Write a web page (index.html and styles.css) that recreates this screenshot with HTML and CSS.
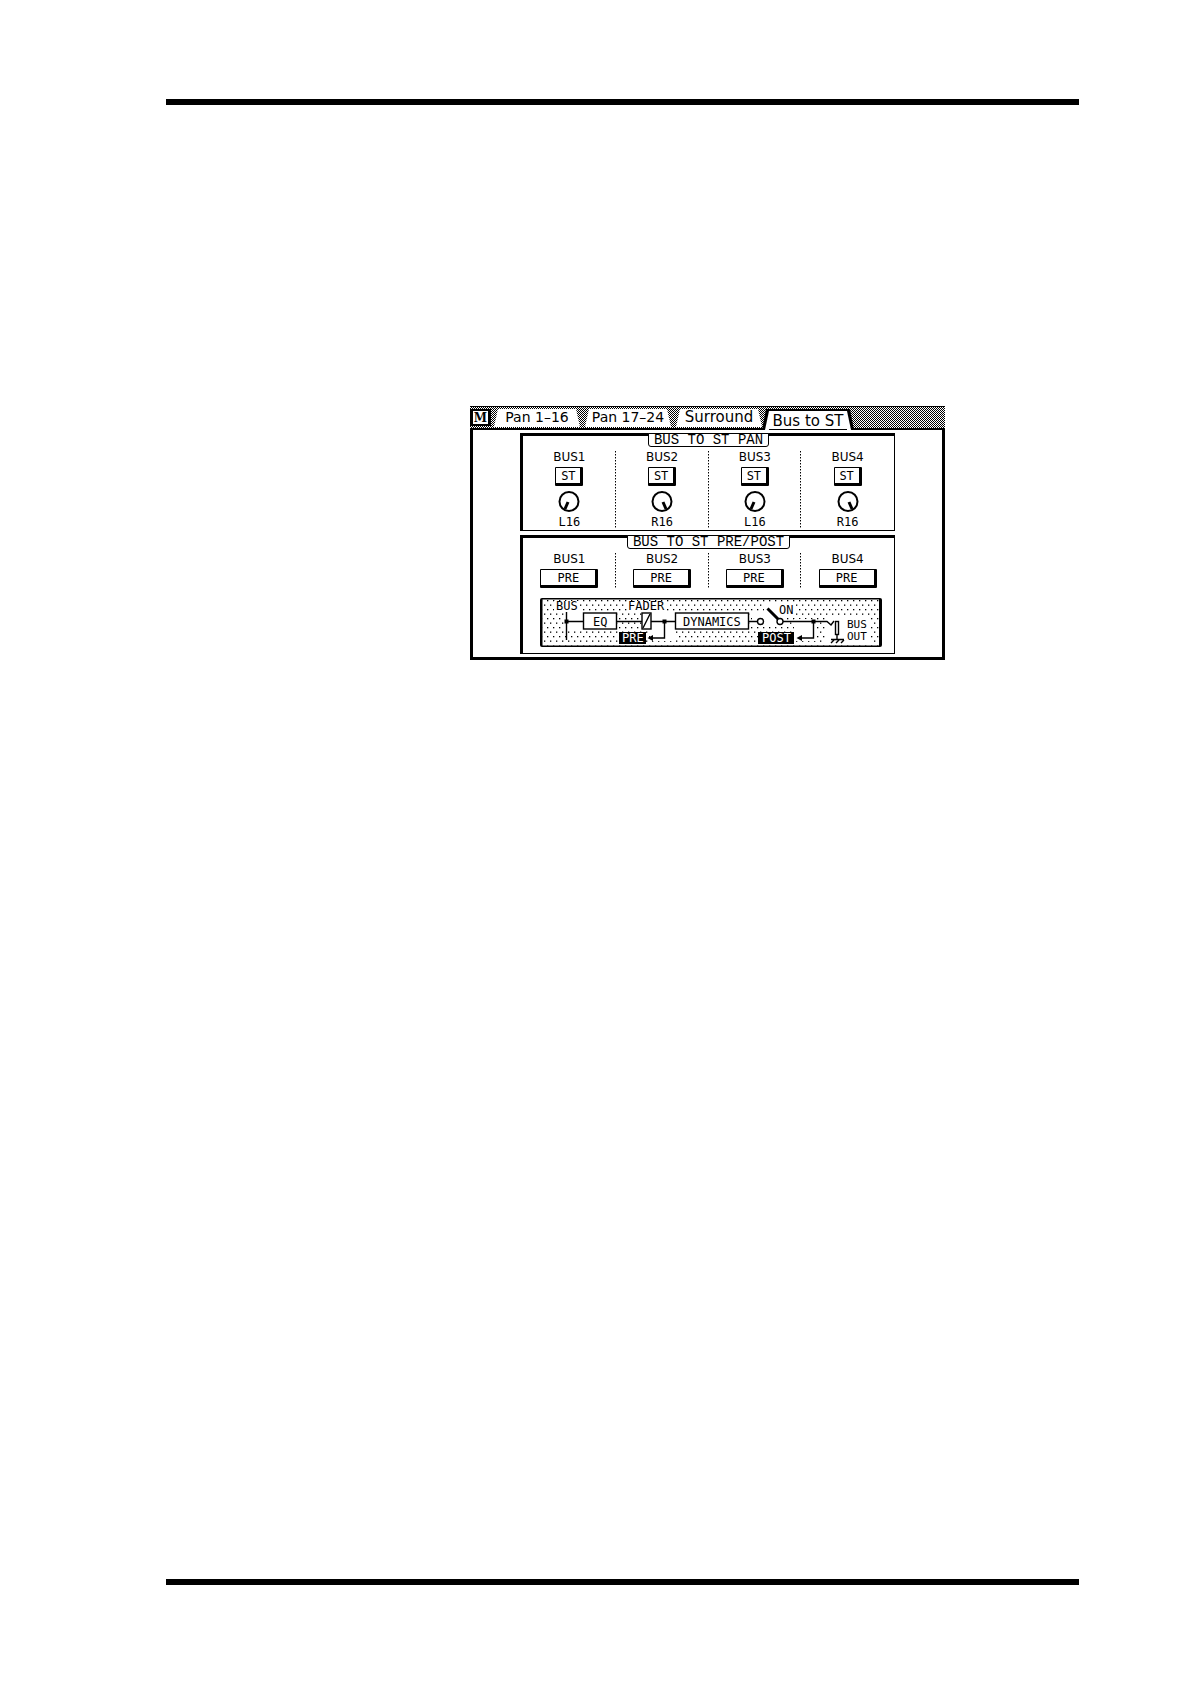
FILE: index.html
```html
<!DOCTYPE html>
<html lang="en">
<head>
  <meta charset="utf-8">
  <title>Bus to ST</title>
  <link rel="stylesheet" href="styles.css">
</head>
<body>
  <hr class="rule">

  <main class="screen">
    <nav class="tabs">
      <button class="mode">M</button>
      <button class="tab">Pan 1–16</button>
      <button class="tab">Pan 17–24</button>
      <button class="tab wide">Surround</button>
      <button class="tab active wide"><span>Bus to ST</span></button>
    </nav>

    <div class="content">
      <section class="panel">
        <h2>BUS TO ST PAN</h2>
        <div class="buses">
          <div class="bus">
            <h3>BUS1</h3>
            <button class="key">ST</button>
            <svg class="knob" viewBox="0 0 22 22"><circle cx="11" cy="11.5" r="9.5"/><path d="M10 12L7 19"/></svg>
            <span class="value">L16</span>
          </div>
          <div class="bus">
            <h3>BUS2</h3>
            <button class="key">ST</button>
            <svg class="knob" viewBox="0 0 22 22"><circle cx="11" cy="11.5" r="9.5"/><path d="M12 12L15 19"/></svg>
            <span class="value">R16</span>
          </div>
          <div class="bus">
            <h3>BUS3</h3>
            <button class="key">ST</button>
            <svg class="knob" viewBox="0 0 22 22"><circle cx="11" cy="11.5" r="9.5"/><path d="M10 12L7 19"/></svg>
            <span class="value">L16</span>
          </div>
          <div class="bus">
            <h3>BUS4</h3>
            <button class="key">ST</button>
            <svg class="knob" viewBox="0 0 22 22"><circle cx="11" cy="11.5" r="9.5"/><path d="M12 12L15 19"/></svg>
            <span class="value">R16</span>
          </div>
        </div>
      </section>

      <section class="panel">
        <h2>BUS TO ST PRE/POST</h2>
        <div class="buses">
          <div class="bus">
            <h3>BUS1</h3>
            <button class="key long">PRE</button>
          </div>
          <div class="bus">
            <h3>BUS2</h3>
            <button class="key long">PRE</button>
          </div>
          <div class="bus">
            <h3>BUS3</h3>
            <button class="key long">PRE</button>
          </div>
          <div class="bus">
            <h3>BUS4</h3>
            <button class="key long">PRE</button>
          </div>
        </div>

        <svg class="diagram" viewBox="0 0 342 49">
          <defs>
            <pattern id="dots" width="6" height="9" patternUnits="userSpaceOnUse">
              <rect x="1" y="2" width="1.3" height="1.3"/>
              <rect x="4" y="6.5" width="1.3" height="1.3"/>
            </pattern>
          </defs>
          <rect width="342" height="49" rx="2"/>
          <rect x="2.5" y="1.5" width="336.5" height="46" fill="#fff"/>
          <rect x="2.5" y="1.5" width="336.5" height="46" fill="url(#dots)"/>

          <!-- clear the dots behind labels and symbols -->
          <g fill="#fff">
            <rect x="14" y="3" width="25" height="11"/>
            <rect x="87" y="3" width="39" height="11"/>
            <rect x="24" y="14" width="19" height="17"/>
            <rect x="110" y="15" width="25" height="28"/>
            <rect x="212" y="15" width="34" height="14"/>
            <rect x="224" y="5" width="31" height="14"/>
            <rect x="254" y="21" width="23" height="22"/>
            <rect x="286" y="20" width="45" height="25"/>
          </g>

          <g class="wire">
            <path d="M26.5 14V42M26.5 23.5H43M77 23.5H102M111 23.5H135M209 23.5H217M243 23.5H287L291 27L294 23"/>
            <path d="M124.5 23.5V40H112M273.5 23.5V40H261"/>
            <rect class="box" x="43.5" y="15" width="33" height="16"/>
            <rect class="box" x="102" y="15" width="9" height="16"/>
            <path d="M103 30L110 16"/>
            <rect class="box" x="135.5" y="15" width="73" height="16"/>
            <circle class="box" cx="220.5" cy="23.5" r="3"/>
            <circle class="box" cx="240" cy="23.5" r="3"/>
            <rect class="box" x="295.5" y="23.5" width="3" height="13"/>
            <path d="M297 37V41M291 41.5H304M294 42L291 45M299 42L296 45M304 42L301 45"/>
          </g>
          <path class="lever" d="M227.5 10.5L238 21"/>
          <path d="M24.5 21.5h4v4h-4zM122.5 21.5h4v4h-4zM271.5 21.5h4v4h-4z"/>
          <path d="M107.5 40L113 37V43zM256.5 40L262 37V43z"/>
          <rect x="79" y="34" width="27" height="12"/>
          <rect x="218" y="34" width="36" height="12"/>

          <text x="16" y="12">BUS</text>
          <text x="88" y="12">FADER</text>
          <text x="53" y="28">EQ</text>
          <text x="143" y="28">DYNAMICS</text>
          <text x="239" y="16">ON</text>
          <text class="small" x="307" y="30">BUS</text>
          <text class="small" x="307" y="42">OUT</text>
          <text class="invert" x="82" y="44">PRE</text>
          <text class="invert" x="222" y="44">POST</text>
        </svg>
      </section>
    </div>
  </main>

  <hr class="rule bottom">
</body>
</html>
```
FILE: styles.css
```css
* {
  box-sizing: border-box;
}
body {
  display: flex;
  flex-direction: column;
  min-height: 100vh;
  margin: 0;
  padding: 99px 111px 99px 166px;
  background: #fff;
  color: #000;
  font: 12px/12px "DejaVu Sans", sans-serif;
}
h2, h3 {
  margin: 0;
  font-size: 12px;
  font-weight: normal;
}
button {
  padding: 0;
  border: none;
  background: #fff;
  color: #000;
  font: inherit;
  cursor: pointer;
}
.rule {
  width: 100%;
  height: 6px;
  margin: 0;
  border: none;
  background: #000;
}
.rule.bottom {
  margin-top: auto;
}

.screen {
  max-width: 475px;
  width: 100%;
  margin: 301px 0 40px 304px;
}

/* tab bar */
.tabs {
  display: flex;
  align-items: flex-start;
  height: 24px;
  padding-top: 2px;
  border-top: 1px solid #000;
  border-bottom: 2px solid #000;
  background: repeating-conic-gradient(#000 0 25%, #fff 0 50%) 0 0 / 2px 2px;
}
.mode {
  width: 21px;
  height: 17px;
  margin-right: 3px;
  border: 3px solid #000;
  border-width: 2px 3px;
  font: bold 12px/12px "DejaVu Serif", serif;
}
.tab {
  width: 86px;
  height: 18px;
  margin-right: 5px;
  padding-bottom: 3px;
  font-size: 14px;
  line-height: 14px;
  clip-path: polygon(4px 0, calc(100% - 4px) 0, 100% 100%, 0 100%);
}
.tab.wide {
  font-size: 15px;
}
.tab:nth-child(4) {
  margin-right: 0;
}
.tab.active {
  position: relative;
  width: 92px;
  height: 21px;
  margin: 0;
  padding: 0;
  background: #000;
}
.tab.active::before {
  content: "";
  position: absolute;
  inset: 2px 3px 0;
  background: #fff;
  clip-path: polygon(4px 0, calc(100% - 4px) 0, 100% 100%, 0 100%);
}
.tab.active span {
  position: relative;
  display: block;
  margin: 2px 7px 0;
  padding-top: 2px;
  border-bottom: 1px solid #000;
  line-height: 15px;
}

.content {
  display: flex;
  flex-direction: column;
  gap: 4px;
  padding: 3px 47px;
  border: 3px solid #000;
  border-top: none;
}

/* panels */
.panel {
  display: flex;
  flex-direction: column;
  align-items: center;
  border: 1px solid #000;
  border-top-width: 3px;
  border-left-width: 3px;
}
.panel h2 {
  height: 14px;
  margin-top: -3px;
  padding: 0 5px;
  border: 1px solid #000;
  border-radius: 0 0 3px 3px;
  background: #fff;
  font: 14px/13px "Liberation Mono", monospace;
}
.buses {
  display: grid;
  grid-template-columns: repeat(4, 1fr);
  width: 100%;
  padding: 4px 0 2px;
}
.bus {
  display: flex;
  flex-direction: column;
  align-items: center;
  gap: 4px;
}
.bus:not(:last-child) {
  background: repeating-linear-gradient(#000 0 1px, #888 1px 2px, #fff 2px 3px) right / 1px 100% no-repeat;
}
.key {
  width: 28px;
  height: 19px;
  border: 1px solid #000;
  border-width: 1px 3px 3px 1px;
  border-radius: 1px;
}
.key,
.value,
.diagram text {
  font-family: "DejaVu Sans Mono", monospace;
  font-size: 12px;
}
.key.long {
  width: 58px;
}
.knob {
  width: 22px;
  height: 22px;
  fill: none;
  stroke: #000;
  stroke-width: 2;
}
.knob path {
  stroke-width: 3;
}

/* signal path */
.diagram {
  width: 342px;
  max-width: 100%;
  margin: 8px 0 6px 4px;
}
.wire {
  fill: none;
  stroke: #000;
  stroke-width: 1.4;
}
.box {
  fill: #fff;
}
.lever {
  stroke: #000;
  stroke-width: 3;
}
.diagram .small {
  font-size: 11px;
}
.diagram .invert {
  fill: #fff;
}
```
